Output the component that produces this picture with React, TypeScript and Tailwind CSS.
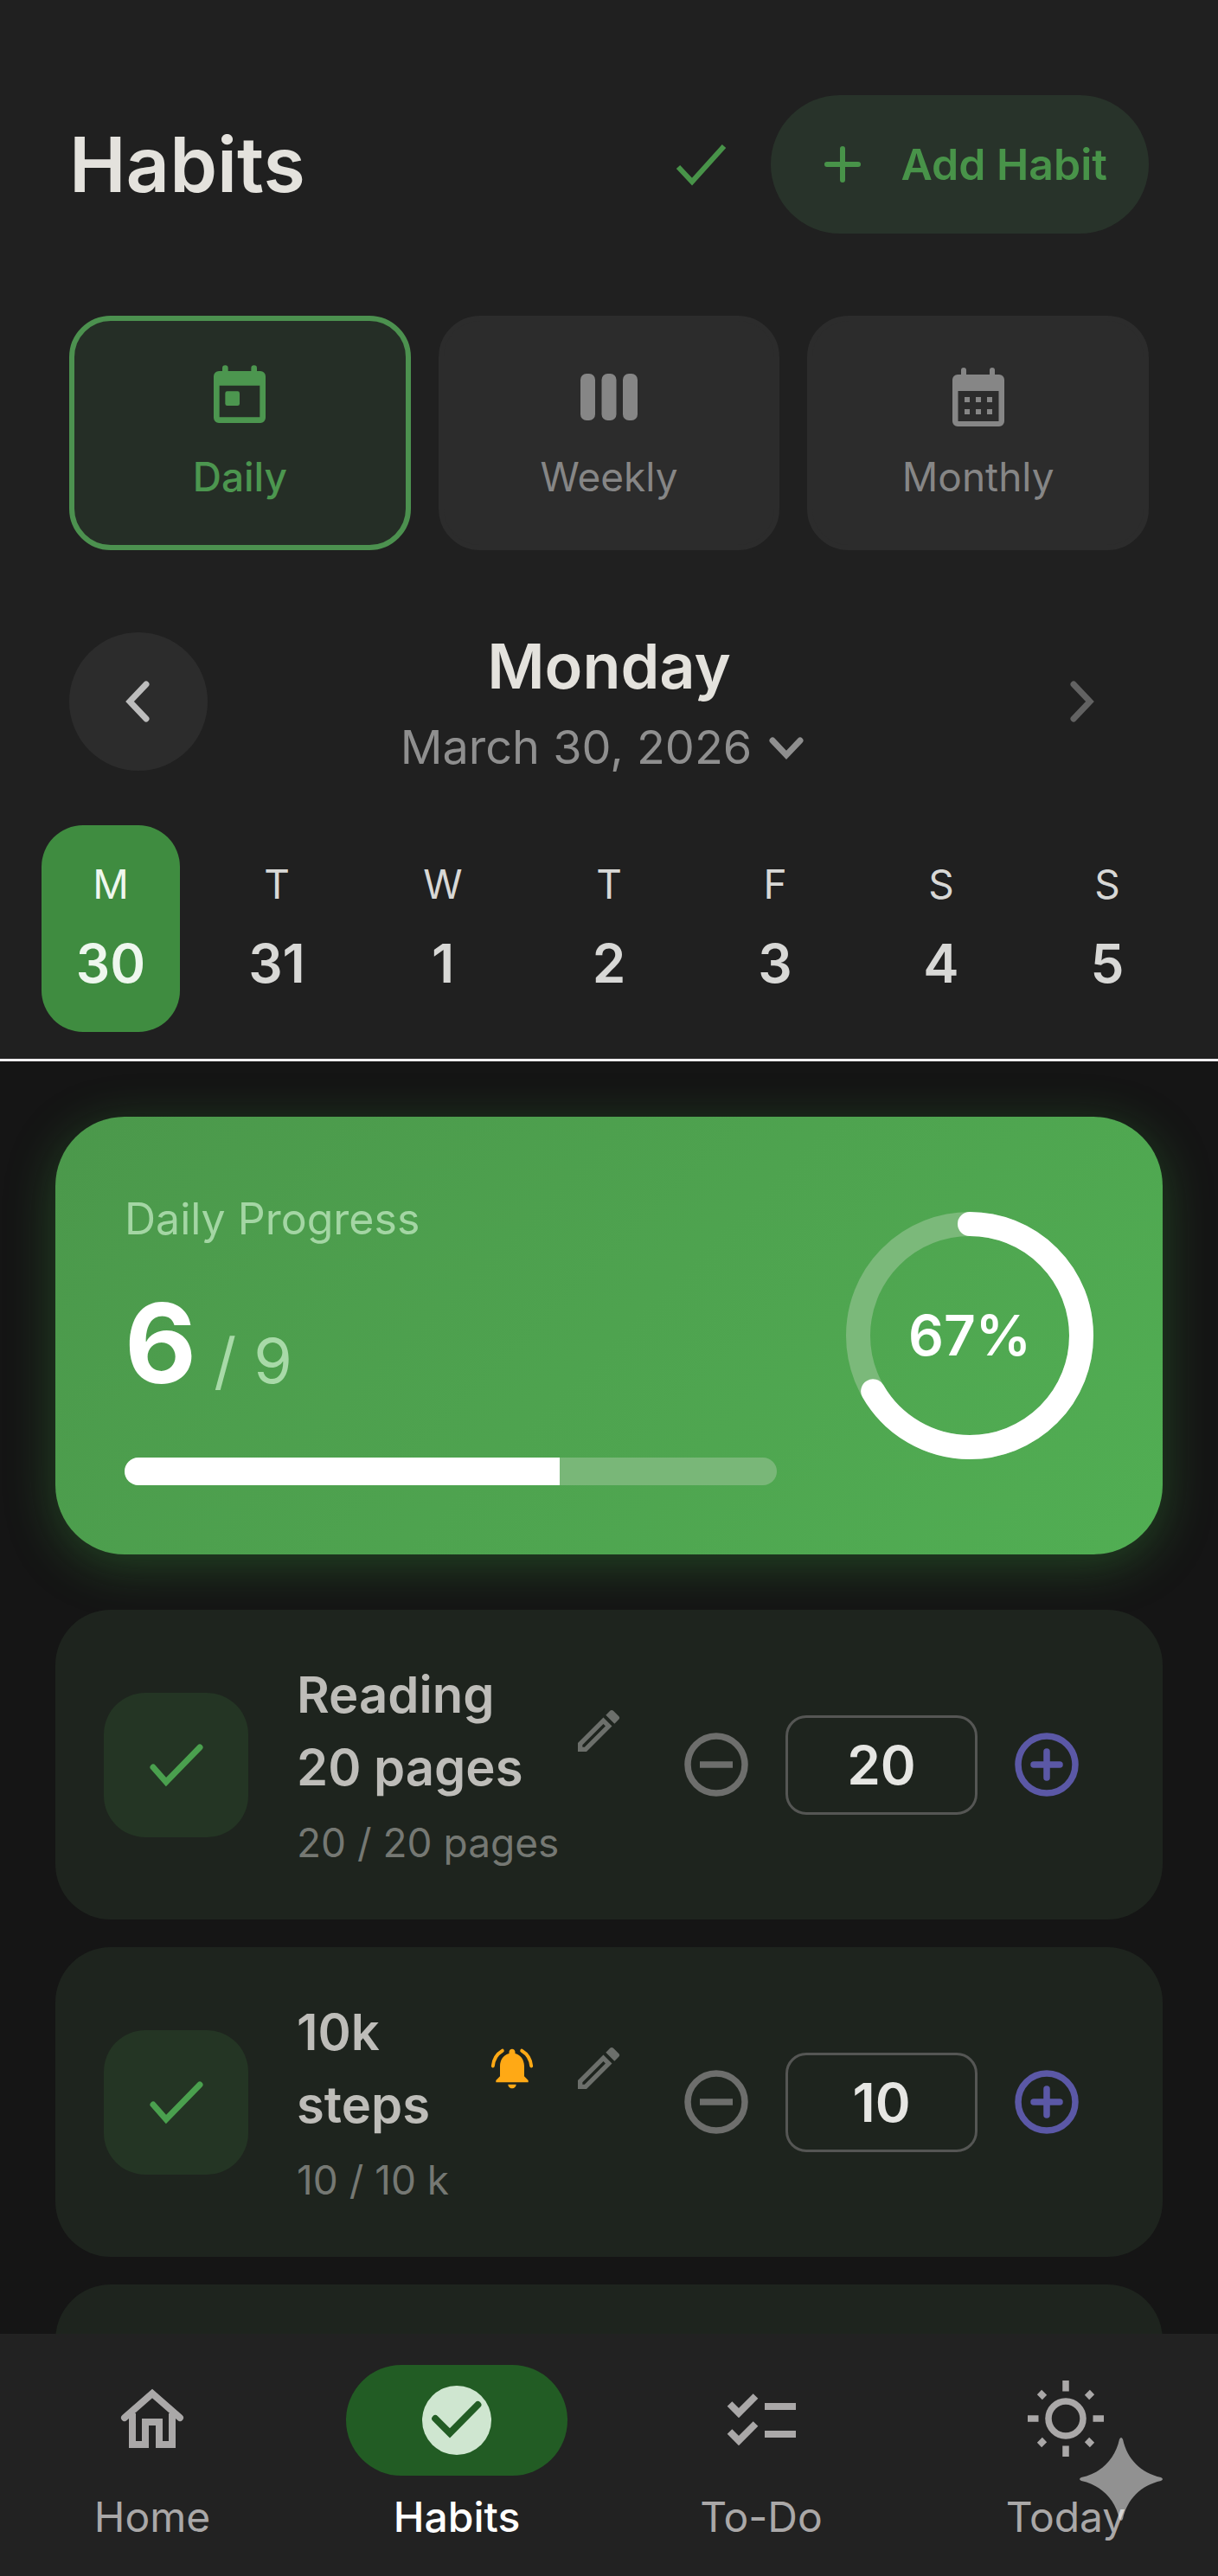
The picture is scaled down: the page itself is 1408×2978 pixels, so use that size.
import React, { useState } from "react"

type Habit = {
    id: string
    title: string
    unit: string
    goal: number
    reminder: boolean
}

const HABITS: Habit[] = [
    { id: "reading", title: "Reading 20 pages", unit: "pages", goal: 20, reminder: false },
    { id: "steps", title: "10k steps", unit: "k", goal: 10, reminder: true },
]

const DAYS = [
    { letter: "M", date: 30 },
    { letter: "T", date: 31 },
    { letter: "W", date: 1 },
    { letter: "T", date: 2 },
    { letter: "F", date: 3 },
    { letter: "S", date: 4 },
    { letter: "S", date: 5 },
]

const DailyIcon = () => (
    <svg className="size-20" viewBox="0 0 24 24" fill="currentColor" aria-hidden="true">
        <path fillRule="evenodd" d="M4.8 3H6V2a1 1 0 0 1 2 0v1h8V2a1 1 0 0 1 2 0v1h1.2A1.8 1.8 0 0 1 21 4.8v14.4a1.8 1.8 0 0 1-1.8 1.8H4.8A1.8 1.8 0 0 1 3 19.2V4.8A1.8 1.8 0 0 1 4.8 3zM5 8v11h14V8z" />
        <rect x="7" y="10" width="5" height="5" rx="0.7" />
    </svg>
)

const WeeklyIcon = () => (
    <svg className="size-20" viewBox="0 0 80 80" fill="currentColor" aria-hidden="true">
        <rect x="7" y="13" width="17" height="54" rx="7" />
        <rect x="31.5" y="13" width="17" height="54" rx="7" />
        <rect x="56" y="13" width="17" height="54" rx="7" />
    </svg>
)

const MonthlyIcon = () => (
    <svg className="size-20" viewBox="0 0 80 80" fill="currentColor" aria-hidden="true">
        <path fillRule="evenodd" d="M16 14h4V9a3 3 0 0 1 6 0v5h27V9a3 3 0 0 1 6 0v5h5a6 6 0 0 1 6 6v48a6 6 0 0 1-6 6H16a6 6 0 0 1-6-6V20a6 6 0 0 1 6-6zM16.5 33v35h47V33z" />
        <path d="M24 40h6v6h-6zM37 40h6v6h-6zM50 40h6v6h-6zM24 54h6v6h-6zM37 54h6v6h-6zM50 54h6v6h-6z" />
    </svg>
)

const PencilIcon = () => (
    <svg className="size-16" viewBox="0 0 24 24" fill="currentColor" aria-hidden="true">
        <path d="m14.06 9.02.92.92L5.92 19H5v-.92l9.06-9.06M17.66 3c-.25 0-.51.1-.7.29l-1.83 1.83 3.75 3.75 1.83-1.83a.996.996 0 0 0 0-1.41l-2.34-2.34c-.2-.2-.45-.29-.71-.29zm-3.6 3.19L3 17.25V21h3.75L17.81 9.94l-3.75-3.75z" />
    </svg>
)

const BellIcon = () => (
    <svg className="size-14" viewBox="0 0 24 24" fill="#ffa915" aria-hidden="true">
        <path d="M12 22c1.1 0 2-.9 2-2h-4c0 1.1.9 2 2 2zm6-6v-5c0-3.07-1.63-5.64-4.5-6.32V4c0-.83-.67-1.5-1.5-1.5s-1.5.67-1.5 1.5v.68C7.64 5.36 6 7.92 6 11v5l-2 2v1h16v-1l-2-2z" />
        <path d="M7.2 3.3C4.5 4.9 2.8 7.6 2.5 10.9M16.8 3.3c2.7 1.6 4.4 4.3 4.7 7.6" fill="none" stroke="#ffa915" strokeWidth="1.7" strokeLinecap="round" />
    </svg>
)

const RoundIcon = ({ plus }: { plus?: boolean }) => (
    <svg className="size-20" viewBox="0 0 80 80" fill="none" stroke="currentColor" strokeWidth="7.5" aria-hidden="true">
        <circle cx="40" cy="40" r="33" />
        <path d={plus ? "M25 40h30M40 25v30" : "M21 40h38"} strokeLinecap={plus ? "round" : "butt"} />
    </svg>
)

const Chevron = ({ d }: { d: string }) => (
    <svg className="size-18" viewBox="0 0 72 72" fill="none" stroke="currentColor" strokeWidth="7" strokeLinecap="round" aria-hidden="true">
        <path d={d} />
    </svg>
)

const HomeIcon = () => (
    <svg className="size-24" viewBox="0 0 96 96" fill="none" stroke="currentColor" strokeWidth="8" aria-hidden="true">
        <path d="M16 45 48 17 80 45" strokeLinecap="round" />
        <path d="M25 40v36h15V50h16v26h15V40" />
    </svg>
)

const HabitsIcon = () => (
    <svg className="size-24" viewBox="0 0 24 24" aria-hidden="true">
        <circle cx="12" cy="12" r="10" fill="#cfe6d0" />
        <path d="m5.8 11.5 4.2 4.2 8.1-8.2" fill="none" stroke="#225c24" strokeWidth="2" strokeLinecap="round" />
    </svg>
)

const TodoIcon = () => (
    <svg className="size-24" viewBox="0 0 96 96" fill="none" stroke="currentColor" strokeWidth="8" aria-hidden="true">
        <path d="m11.5 29 10.5 10.5L41.5 20M11.5 61l10.5 10.5L41.5 52M52 32h36M52 64h36" />
    </svg>
)

const SunIcon = () => (
    <svg className="size-24" viewBox="0 0 96 96" fill="none" stroke="currentColor" strokeWidth="7.5" aria-hidden="true">
        <circle cx="48" cy="46" r="20" />
        <path d="M48 2v12.5M48 77.5V90M4 46h12.5M79.5 46H92M17.500 15.5l6 6M72.500 70.5l6 6M78.500 15.5l-6 6M23.500 70.5l-6 6" />
    </svg>
)

const TABS = [
    { name: "Daily", icon: <DailyIcon /> },
    { name: "Weekly", icon: <WeeklyIcon /> },
    { name: "Monthly", icon: <MonthlyIcon /> },
]

const LINKS = [
    { name: "Home", href: "#home", icon: <HomeIcon /> },
    { name: "Habits", href: "#habits", icon: <HabitsIcon /> },
    { name: "To-Do", href: "#todo", icon: <TodoIcon /> },
    { name: "Today", href: "#today", icon: <SunIcon /> },
]

const Header = () => {
    const [tab, setTab] = useState("Daily")
    const [day, setDay] = useState(30)

    return (
        <header className="shrink-0 bg-[#202020] border-b-3 border-[#f0eef0] pt-[110px] pb-[31px]">
            <div className="flex items-center justify-between px-20">
                <h1 className="text-[88px] leading-[96px] font-semibold text-[#e4e2dd]">Habits</h1>
                <div className="flex items-center gap-8 text-[#489349]">
                    <button className="flex size-24 items-center justify-center" aria-label="Mark all done">
                        <svg className="size-24" viewBox="0 0 96 96" fill="none" stroke="currentColor" strokeWidth="6" aria-hidden="true">
                            <path d="m21 51 16 17 37-41" />
                        </svg>
                    </button>
                    <button className="flex h-40 items-center gap-8 rounded-full bg-[#28332a] px-12">
                        <svg className="size-[70px]" viewBox="0 0 70 70" fill="none" stroke="currentColor" strokeWidth="6" strokeLinecap="round" aria-hidden="true">
                            <path d="M17 35h36M35 17v36" />
                        </svg>
                        <span className="text-[50px] font-semibold">Add Habit</span>
                    </button>
                </div>
            </div>

            <div className="mt-[95px] grid grid-cols-3 gap-8 px-20">
                {TABS.map(({ name, icon }) => (
                    <button
                        key={name}
                        onClick={() => setTab(name)}
                        className={`flex h-[271px] flex-col items-center justify-center gap-6 rounded-[48px] border-6 pb-1 ${
                            tab === name
                                ? "border-[#4c914f] bg-[#252e26] font-medium text-[#4c964f]"
                                : "border-[#2c2c2c] bg-[#2c2c2c] text-[#868686]"
                        }`}
                    >
                        {icon}
                        <span className="text-[46px] leading-[56px]">{name}</span>
                    </button>
                ))}
            </div>

            <div className="mt-[95px] flex items-center justify-between px-20">
                <button className="flex size-40 items-center justify-center rounded-full bg-[#2c2c2c] text-[#bdbdbd]" aria-label="Previous day">
                    <Chevron d="M45 16 26 36l19 20" />
                </button>
                <div className="flex flex-col items-center">
                    <h2 className="text-[72px] leading-[78px] font-semibold text-[#e4e2dd]">Monday</h2>
                    <button className="mt-7 flex h-[54px] items-center gap-1 text-[54px] leading-[54px] text-[#8f8f8f]">
                        March 30, 2026
                        <Chevron d="M20 28l16 17 16-17" />
                    </button>
                </div>
                <button className="flex size-40 items-center justify-center text-[#626262]" aria-label="Next day">
                    <Chevron d="M29 16l19 20-19 20" />
                </button>
            </div>

            <div className="mt-[63px] grid grid-cols-7 gap-8 px-12">
                {DAYS.map(({ letter, date }) => (
                    <button
                        key={date}
                        onClick={() => setDay(date)}
                        className={`flex h-[239px] flex-col items-center justify-center gap-7 rounded-[48px] pb-1 ${
                            day === date ? "bg-[#3f8c40] text-[#eef7ee]" : "text-[#d8d8d6]"
                        }`}
                    >
                        <span className="text-[46px] leading-[56px]">{letter}</span>
                        <span className="text-[62px] leading-[72px] font-semibold">{date}</span>
                    </button>
                ))}
            </div>
        </header>
    )
}

const Progress = ({ done, total }: { done: number; total: number }) => {
    const ratio = done / total
    const length = 2 * Math.PI * 129

    return (
        <section className="flex items-center gap-20 rounded-[80px] bg-linear-135 from-[#4b984b] to-[#51ae53] p-20 shadow-[0_12px_56px_rgba(60,160,64,0.35)]">
            <div className="flex-1">
                <p className="text-[50px] leading-[76px] text-[#a4d6a4]">Daily Progress</p>
                <p className="mt-7 flex items-baseline gap-5 text-[#a8daa8]">
                    <span className="text-[128px] leading-[156px] font-bold text-white">{done}</span>
                    <span className="text-[72px] leading-[80px]">/ {total}</span>
                </p>
                <div className="mt-[54px] h-8 overflow-hidden rounded-full bg-[#79b778]">
                    <div className="h-full bg-white" style={{ width: `${ratio * 100}%` }} />
                </div>
            </div>
            <div className="grid shrink-0 place-items-center">
                <svg className="col-start-1 row-start-1 size-[286px]" viewBox="0 0 286 286" fill="none" strokeWidth="28" aria-hidden="true">
                    <circle cx="143" cy="143" r="129" stroke="#7bb97a" />
                    <circle
                        cx="143"
                        cy="143"
                        r="129"
                        stroke="white"
                        strokeLinecap="round"
                        strokeDasharray={`${length * ratio} ${length}`}
                        transform="rotate(-90 143 143)"
                    />
                </svg>
                <span className="col-start-1 row-start-1 text-[64px] font-semibold text-white">{Math.round(ratio * 100)}%</span>
            </div>
        </section>
    )
}

const HabitCard = ({ habit }: { habit: Habit }) => {
    const [count, setCount] = useState(habit.goal)

    return (
        <article className="flex shrink-0 items-center gap-14 rounded-[64px] bg-[#1e241e] py-14 pr-[70px] pl-14">
            <label className="flex size-[167px] shrink-0 items-center justify-center rounded-[48px] bg-[#243524]">
                <input type="checkbox" className="sr-only" checked={count >= habit.goal} readOnly aria-label={habit.title} />
                <svg className="size-20" viewBox="0 0 80 80" fill="none" stroke="#4aa04e" strokeWidth="7" strokeLinecap="round" aria-hidden="true">
                    <path d="m13 43 15 17 39-40" />
                </svg>
            </label>
            <div className="flex flex-1 items-center gap-10">
                <div className="min-w-0 flex-1">
                    <div className="flex items-center gap-10">
                        <h3 className="flex-1 text-[58px] leading-[84px] font-semibold text-[#bebdb9]">{habit.title}</h3>
                        {habit.reminder && <BellIcon />}
                        <button className="-ml-10 pl-10 text-[#6c6f6b]" aria-label={`Edit ${habit.title}`}>
                            <PencilIcon />
                        </button>
                    </div>
                    <p className="mt-3 text-[46px] leading-[66px] whitespace-nowrap text-[#757873]">
                        {count} / {habit.goal} {habit.unit}
                    </p>
                </div>
                <div className="flex items-center gap-4">
                    <button className="flex size-32 items-center justify-center text-[#6d6e6c]" onClick={() => setCount(count - 1)} aria-label="Decrease">
                        <RoundIcon />
                    </button>
                    <input
                        className="h-[115px] w-[222px] rounded-3xl border-3 border-[#555654] text-center text-[62px] font-semibold text-[#e6e6e3]"
                        value={count}
                        onChange={(e) => setCount(Number(e.target.value))}
                        aria-label={`${habit.title} count`}
                    />
                    <button className="flex size-32 items-center justify-center text-[#5b58a6]" onClick={() => setCount(count + 1)} aria-label="Increase">
                        <RoundIcon plus />
                    </button>
                </div>
            </div>
        </article>
    )
}

const BottomNav = () => {
    return (
        <nav className="relative grid shrink-0 grid-cols-4 bg-[#222222] pt-9 pb-10">
            {LINKS.map(({ name, href, icon }) => (
                <a
                    key={name}
                    href={href}
                    className={`flex flex-col items-center gap-5 ${name === "Habits" ? "font-medium text-white" : "text-[#aaa8a8]"}`}
                >
                    <span className={`flex h-32 w-64 items-center justify-center rounded-full ${name === "Habits" ? "bg-[#225c24]" : ""}`}>
                        {icon}
                    </span>
                    <span className="text-[48px] leading-[56px]">{name}</span>
                </a>
            ))}
            <svg className="absolute right-16 bottom-16 size-24" viewBox="0 0 96 96" fill="white" fillOpacity="0.5" aria-hidden="true">
                <path d="M46 2q2-4 4 0C55 25 71 41 94 46q4 2 0 4C71 55 55 71 50 94q-2 4-4 0C41 71 25 55 2 50q-4-2 0-4C25 41 41 25 46 2z" />
            </svg>
        </nav>
    )
}

const App = () => {
    return (
        <div className="flex h-screen flex-col bg-[#151515] font-[Inter,sans-serif]">
            <Header />
            <main className="flex min-h-0 flex-1 flex-col overflow-y-auto px-16 pt-16 [scrollbar-width:none]">
                <Progress done={6} total={9} />
                <div className="mt-16 flex flex-col gap-8">
                    {HABITS.map((habit) => (
                        <HabitCard key={habit.id} habit={habit} />
                    ))}
                    <article className="h-[358px] shrink-0 rounded-[64px] bg-[#1e241e]" />
                </div>
            </main>
            <BottomNav />
        </div>
    )
}

export default App
